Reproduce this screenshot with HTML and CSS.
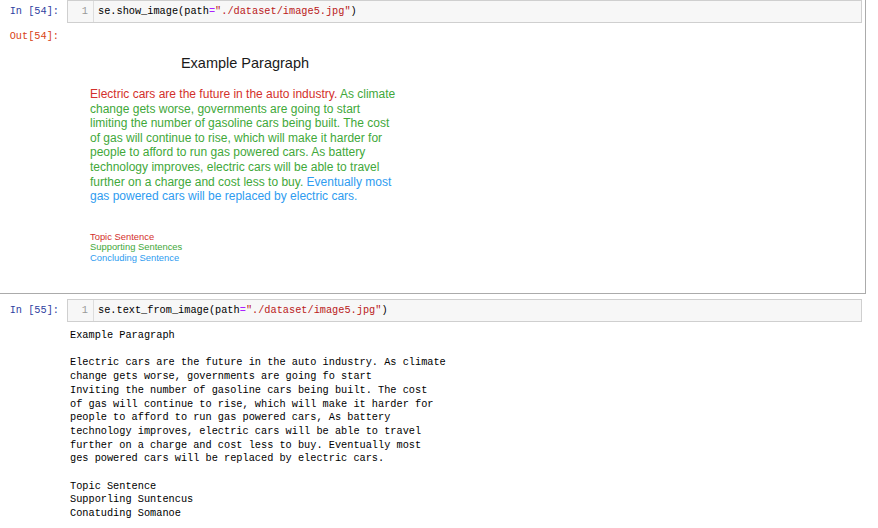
FILE: index.html
```html
<!DOCTYPE html>
<html>
<head>
<meta charset="utf-8">
<link rel="stylesheet" href="styles.css">
</head>
<body>
<div class="notebook">
  <div class="cell selected">
    <div class="row input-row">
      <div class="prompt in-prompt">In&nbsp;[54]:</div>
      <div class="input-box">
        <div class="gutter">1</div>
        <div class="code">se.show_image(path<span class="op">=</span><span class="str">"./dataset/image5.jpg"</span>)</div>
      </div>
    </div>
    <div class="row output-row">
      <div class="prompt out-prompt">Out[54]:</div>
      <div class="image">
        <div class="img-title">Example Paragraph</div>
        <div class="img-para">
          <div><span class="red">Electric cars are the future in the auto industry.</span> <span class="green">As climate</span></div>
          <div class="green">change gets worse, governments are going to start</div>
          <div class="green">limiting the number of gasoline cars being built. The cost</div>
          <div class="green">of gas will continue to rise, which will make it harder for</div>
          <div class="green">people to afford to run gas powered cars. As battery</div>
          <div class="green">technology improves, electric cars will be able to travel</div>
          <div><span class="green">further on a charge and cost less to buy.</span> <span class="blue">Eventually most</span></div>
          <div class="blue">gas powered cars will be replaced by electric cars.</div>
        </div>
        <div class="img-legend">
          <div class="red">Topic Sentence</div>
          <div class="green">Supporting Sentences</div>
          <div class="blue">Concluding Sentence</div>
        </div>
      </div>
    </div>
  </div>
  <div class="cell">
    <div class="row input-row">
      <div class="prompt in-prompt">In&nbsp;[55]:</div>
      <div class="input-box">
        <div class="gutter">1</div>
        <div class="code">se.text_from_image(path<span class="op">=</span><span class="str">"./dataset/image5.jpg"</span>)</div>
      </div>
    </div>
    <div class="row">
      <div class="prompt"></div>
      <pre class="text-out">Example Paragraph

Electric cars are the future in the auto industry. As climate
change gets worse, governments are going fo start
Inviting the number of gasoline cars being built. The cost
of gas will continue to rise, which will make it harder for
people to afford to run gas powered cars, As battery
technology improves, electric cars will be able to travel
further on a charge and cost less to buy. Eventually most
ges powered cars will be replaced by electric cars.

Topic Sentence
Supporling Suntencus
Conatuding Somanoe</pre>
    </div>
  </div>
</div>
</body>
</html>
```

FILE: styles.css
```css
html, body {
  margin: 0;
  padding: 0;
  background: #ffffff;
}
body {
  width: 878px;
  height: 528px;
  overflow: hidden;
  font-family: "Liberation Mono", monospace;
  font-size: 10.27px;
  color: #000;
}
.notebook {
  display: flex;
  flex-direction: column;
}
.cell {
  width: 866px;
  display: flex;
  flex-direction: column;
}
.cell.selected {
  border-top: 1px solid #ababab;
  border-right: 1px solid #ababab;
  border-bottom: 1px solid #ababab;
  margin-top: -1px;
  height: 295px;
  box-sizing: border-box;
}
.cell + .cell {
  margin-top: 5px;
}
.row {
  display: flex;
  align-items: flex-start;
}
.prompt {
  width: 67px;
  flex: none;
  box-sizing: border-box;
  padding-right: 8px;
  text-align: right;
  line-height: 13.7px;
  white-space: nowrap;
}
.in-prompt {
  color: #303f9f;
  padding-top: 5px;
}
.out-prompt {
  color: #d84315;
  padding-top: 7px;
}
.input-box {
  width: 795px;
  height: 23px;
  box-sizing: border-box;
  border: 1px solid #cfcfcf;
  background: #f7f7f7;
  display: flex;
  align-items: stretch;
}
.gutter {
  width: 26px;
  box-sizing: border-box;
  border-right: 1px solid #dddddd;
  color: #999999;
  text-align: right;
  padding-right: 5px;
  line-height: 13.7px;
  padding-top: 4px;
}
.code {
  padding-left: 4px;
  line-height: 13.7px;
  padding-top: 4px;
  color: #000;
  white-space: pre;
}
.op { color: #aa22ff; }
.str { color: #ba2121; }

.image {
  width: 356px;
  font-family: "Liberation Sans", Arial, sans-serif;
  padding-top: 31px;
}
.img-title {
  text-align: center;
  font-size: 14.5px;
  line-height: 18px;
  color: #1a1a1a;
}
.img-para {
  padding-left: 23px;
  margin-top: 15px;
  font-size: 12px;
  line-height: 14.6px;
  white-space: nowrap;
}
.img-legend {
  padding-left: 23px;
  margin-top: 28px;
  font-size: 9.4px;
  line-height: 10.5px;
  white-space: nowrap;
}
.red { color: #d3302c; }
.green { color: #3fa83a; }
.blue { color: #2e9cf0; }

.text-out {
  margin: 0;
  padding: 7px 0 0 3px;
  font-family: "Liberation Mono", monospace;
  font-size: 10.27px;
  line-height: 13.7px;
  color: #000;
}
```
